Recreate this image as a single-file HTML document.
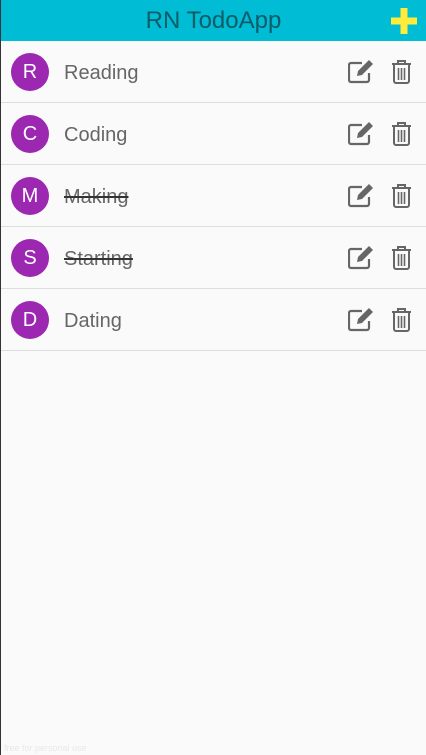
<!DOCTYPE html>
<html><head><meta charset="utf-8"><style>
*{margin:0;padding:0;box-sizing:border-box}
body{width:426px;height:755px;background:#fafafa;font-family:"Liberation Sans",sans-serif;position:relative;overflow:hidden;border-left:1px solid #333}
.hdr{height:41px;background:#00bcd4;position:relative}
.hdr .t{position:absolute;left:0;right:0;top:7px;text-align:center;font-size:24px;color:#0d5c68}
.plus{position:absolute;left:390px;top:8px}
.row{height:62px;border-bottom:1px solid #dedede;position:relative}
.av{position:absolute;left:10px;top:12px;width:38px;height:38px;border-radius:50%;background:#9c27b0;color:#fff;font-size:20px;text-align:center;line-height:39px}
.tx{position:absolute;left:63px;top:21px;font-size:20px;color:#666}
.done{text-decoration:line-through;color:#666;text-decoration-color:#333}
.ed{position:absolute;left:347px;top:19px}
.tr{position:absolute;left:390px;top:19px}
.foot{position:absolute;left:3px;bottom:2px;font-size:9px;color:#e8e8e8}
</style></head><body>
<div class="hdr"><div class="t">RN TodoApp</div>
<svg class="plus" width="26" height="26" viewBox="0 0 26 26"><rect x="9.5" y="0" width="7" height="26" fill="#ffeb3b"/><rect x="0" y="9.5" width="26" height="7" fill="#ffeb3b"/></svg></div>
<div class="row"><div class="av">R</div><div class="tx">Reading</div>
<svg class="ed" width="28" height="24" viewBox="0 0 28 24"><path d="M14 3H3a2 2 0 0 0-2 2v15a2 2 0 0 0 2 2h16a2 2 0 0 0 2-2v-7" fill="none" stroke="#666" stroke-width="2.2"/><path d="M10 11l11-11 4 4-11 11-5 1z" fill="#666"/></svg>
<svg class="tr" width="21" height="24" viewBox="0 0 21 24"><path d="M1 4h19M7 4V1h7v3" fill="none" stroke="#666" stroke-width="2"/><path d="M3 5v16a2 2 0 0 0 2 2h11a2 2 0 0 0 2-2V5" fill="none" stroke="#666" stroke-width="2"/><path d="M7.5 8v12M10.5 8v12M13.5 8v12" stroke="#666" stroke-width="1.6"/></svg></div>
<div class="row"><div class="av">C</div><div class="tx">Coding</div>
<svg class="ed" width="28" height="24" viewBox="0 0 28 24"><path d="M14 3H3a2 2 0 0 0-2 2v15a2 2 0 0 0 2 2h16a2 2 0 0 0 2-2v-7" fill="none" stroke="#666" stroke-width="2.2"/><path d="M10 11l11-11 4 4-11 11-5 1z" fill="#666"/></svg>
<svg class="tr" width="21" height="24" viewBox="0 0 21 24"><path d="M1 4h19M7 4V1h7v3" fill="none" stroke="#666" stroke-width="2"/><path d="M3 5v16a2 2 0 0 0 2 2h11a2 2 0 0 0 2-2V5" fill="none" stroke="#666" stroke-width="2"/><path d="M7.5 8v12M10.5 8v12M13.5 8v12" stroke="#666" stroke-width="1.6"/></svg></div>
<div class="row"><div class="av">M</div><div class="tx done">Making</div>
<svg class="ed" width="28" height="24" viewBox="0 0 28 24"><path d="M14 3H3a2 2 0 0 0-2 2v15a2 2 0 0 0 2 2h16a2 2 0 0 0 2-2v-7" fill="none" stroke="#666" stroke-width="2.2"/><path d="M10 11l11-11 4 4-11 11-5 1z" fill="#666"/></svg>
<svg class="tr" width="21" height="24" viewBox="0 0 21 24"><path d="M1 4h19M7 4V1h7v3" fill="none" stroke="#666" stroke-width="2"/><path d="M3 5v16a2 2 0 0 0 2 2h11a2 2 0 0 0 2-2V5" fill="none" stroke="#666" stroke-width="2"/><path d="M7.5 8v12M10.5 8v12M13.5 8v12" stroke="#666" stroke-width="1.6"/></svg></div>
<div class="row"><div class="av">S</div><div class="tx done">Starting</div>
<svg class="ed" width="28" height="24" viewBox="0 0 28 24"><path d="M14 3H3a2 2 0 0 0-2 2v15a2 2 0 0 0 2 2h16a2 2 0 0 0 2-2v-7" fill="none" stroke="#666" stroke-width="2.2"/><path d="M10 11l11-11 4 4-11 11-5 1z" fill="#666"/></svg>
<svg class="tr" width="21" height="24" viewBox="0 0 21 24"><path d="M1 4h19M7 4V1h7v3" fill="none" stroke="#666" stroke-width="2"/><path d="M3 5v16a2 2 0 0 0 2 2h11a2 2 0 0 0 2-2V5" fill="none" stroke="#666" stroke-width="2"/><path d="M7.5 8v12M10.5 8v12M13.5 8v12" stroke="#666" stroke-width="1.6"/></svg></div>
<div class="row"><div class="av">D</div><div class="tx">Dating</div>
<svg class="ed" width="28" height="24" viewBox="0 0 28 24"><path d="M14 3H3a2 2 0 0 0-2 2v15a2 2 0 0 0 2 2h16a2 2 0 0 0 2-2v-7" fill="none" stroke="#666" stroke-width="2.2"/><path d="M10 11l11-11 4 4-11 11-5 1z" fill="#666"/></svg>
<svg class="tr" width="21" height="24" viewBox="0 0 21 24"><path d="M1 4h19M7 4V1h7v3" fill="none" stroke="#666" stroke-width="2"/><path d="M3 5v16a2 2 0 0 0 2 2h11a2 2 0 0 0 2-2V5" fill="none" stroke="#666" stroke-width="2"/><path d="M7.5 8v12M10.5 8v12M13.5 8v12" stroke="#666" stroke-width="1.6"/></svg></div>
<div class="foot">free for personal use</div>
</body></html>
